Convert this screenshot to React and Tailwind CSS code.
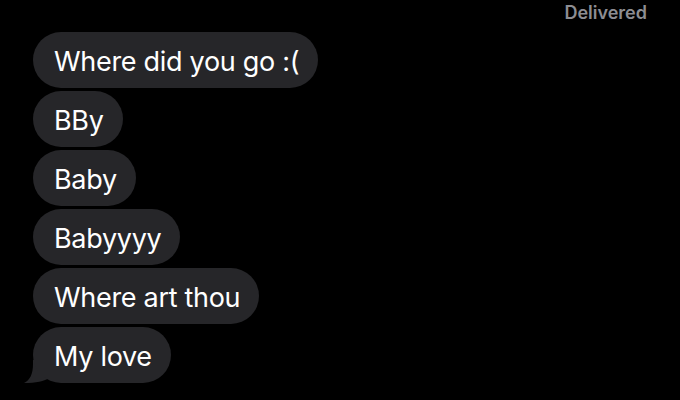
export default function App() {
  const msgs = ["Where did you go :(", "BBy", "Baby", "Babyyyy", "Where art thou", "My love"];
  return (
    <div className="w-[680px] h-[400px] bg-black overflow-hidden relative" style={{ fontFamily: "Inter, 'Noto Sans', sans-serif" }}>
      <div className="flex justify-end pr-[33px] pt-[2px] h-[31px]">
        <span className="text-[18px] font-semibold text-[#8d8d92] leading-[22px]">Delivered</span>
      </div>
      <div className="flex flex-col items-start gap-[3px] pl-[33px] pt-[1px]">
        {msgs.map((m, i) => (
          <div key={i} className="relative">
            {i === msgs.length - 1 && (
              <svg className="absolute left-[-9px] bottom-[-1px]" width="26" height="24" viewBox="0 0 26 24">
                <path d="M26 0 L26 18 C20 21 12 23 0 23 C6 20 9 14 9 4 L9 0 Z" fill="#262629" />
              </svg>
            )}
            <div className="relative bg-[#262629] rounded-[28px] h-[56px] flex items-center pt-[3px] pl-[21px] pr-[19px] text-white text-[27px] leading-none tracking-[-0.3px]">
              {m}
            </div>
          </div>
        ))}
      </div>
    </div>
  );
}
